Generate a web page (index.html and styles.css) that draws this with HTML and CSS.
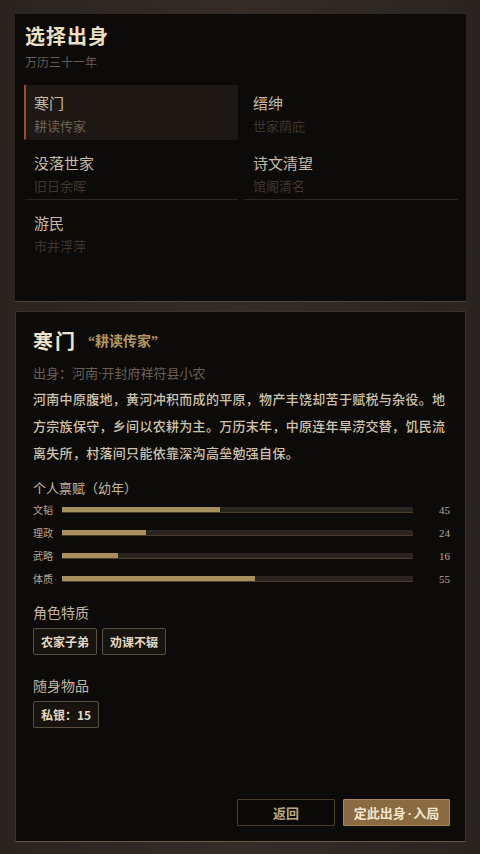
FILE: index.html
```html
<!DOCTYPE html>
<html lang="zh-CN">
<head>
    <meta charset="UTF-8">
    <meta name="viewport" content="width=device-width, initial-scale=1.0">
    <title>选择出身</title>
    <link rel="stylesheet" href="styles.css">
</head>
<body>
    <div class="screen">
        <section class="panel picker">
            <h1 class="picker-title">选择出身</h1>
            <div class="picker-sub">万历三十一年</div>
            <div class="origin-grid">
                <div class="origin-item selected">
                    <div class="origin-name">寒门</div>
                    <div class="origin-tag">耕读传家</div>
                </div>
                <div class="origin-item first-row">
                    <div class="origin-name">缙绅</div>
                    <div class="origin-tag">世家荫庇</div>
                </div>
                <div class="origin-item">
                    <div class="origin-name">没落世家</div>
                    <div class="origin-tag">旧日余晖</div>
                </div>
                <div class="origin-item">
                    <div class="origin-name">诗文清望</div>
                    <div class="origin-tag">馆阁清名</div>
                </div>
                <div class="origin-item last">
                    <div class="origin-name">游民</div>
                    <div class="origin-tag">市井浮萍</div>
                </div>
            </div>
        </section>

        <section class="panel detail">
            <div class="detail-head">
                <h2 class="detail-title">寒门</h2>
                <span class="detail-motto">“耕读传家”</span>
            </div>
            <div class="detail-origin">出身：河南·开封府祥符县小农</div>
            <p class="detail-text">河南中原腹地，黄河冲积而成的平原，物产丰饶却苦于赋税与杂役。地方宗族保守，乡间以农耕为主。万历末年，中原连年旱涝交替，饥民流离失所，村落间只能依靠深沟高垒勉强自保。</p>

            <h3 class="section-title stats-title">个人禀赋（幼年）</h3>
            <div class="stats">
                <div class="stat">
                    <span class="stat-label">文韬</span>
                    <div class="stat-track"><div class="stat-fill" style="width: 45%"></div></div>
                    <span class="stat-value">45</span>
                </div>
                <div class="stat">
                    <span class="stat-label">理政</span>
                    <div class="stat-track"><div class="stat-fill" style="width: 24%"></div></div>
                    <span class="stat-value">24</span>
                </div>
                <div class="stat">
                    <span class="stat-label">武略</span>
                    <div class="stat-track"><div class="stat-fill" style="width: 16%"></div></div>
                    <span class="stat-value">16</span>
                </div>
                <div class="stat">
                    <span class="stat-label">体质</span>
                    <div class="stat-track"><div class="stat-fill" style="width: 55%"></div></div>
                    <span class="stat-value">55</span>
                </div>
            </div>

            <h3 class="section-title">角色特质</h3>
            <div class="tags">
                <span class="tag">农家子弟</span>
                <span class="tag">劝课不辍</span>
            </div>

            <h3 class="section-title">随身物品</h3>
            <div class="tags">
                <span class="tag">私银：15</span>
            </div>

            <div class="actions">
                <button class="btn btn-back">返回</button>
                <button class="btn btn-confirm">定此出身<span class="dot">·</span>入局</button>
            </div>
        </section>
    </div>
</body>
</html>
```

FILE: styles.css
```css
body {
    margin: 0;
    padding: 0;
    font-family: "Noto Sans CJK SC", "Noto Sans", sans-serif;
    background-color: #2b2521;
    background-image: linear-gradient(90deg, #2a2420 0%, #332c27 50%, #2a2420 100%);
    color: #c8bca6;
}
.screen {
    width: 480px;
    height: 854px;
    box-sizing: border-box;
    padding: 14px 14px 12px 15px;
    display: flex;
    flex-direction: column;
    gap: 9px;
}
.panel {
    background: #0d0b0a;
    box-sizing: border-box;
}
.picker {
    height: 288px;
    padding: 8px 8px 0 9px;
    border-bottom: 1px solid #4e443b;
}
.picker-title {
    margin: 0 0 0 1px;
    font-size: 20px;
    line-height: 28px;
    font-weight: 700;
    color: #ece0c2;
    letter-spacing: 1px;
}
.picker-sub {
    margin: 3px 0 0 1px;
    font-size: 12px;
    line-height: 17px;
    color: #655d53;
}
.origin-grid {
    margin-top: 15px;
    display: grid;
    grid-template-columns: 214px 215px;
    column-gap: 5px;
    row-gap: 5px;
}
.origin-item {
    padding: 7px 8px 3px 8px;
    border-left: 2px solid transparent;
    border-bottom: 1px solid #2e271f;
}
.origin-item.selected {
    background: #1d1814;
    border-left-color: #a8462a;
    border-bottom-color: transparent;
}
.origin-item.first-row,
.origin-item.last {
    border-bottom-color: transparent;
}
.origin-name {
    font-size: 15px;
    line-height: 22px;
    color: #c6bba6;
}
.origin-tag {
    margin-top: 2px;
    font-size: 13px;
    line-height: 20px;
    color: #3e362d;
}
.selected .origin-tag {
    color: #6c6153;
}
.detail {
    flex: 1;
    padding: 14px 15px 15px 17px;
    border: 1px solid #3a3128;
    border-bottom-color: #6a5842;
    display: flex;
    flex-direction: column;
}
.detail-head {
    display: flex;
    align-items: center;
    gap: 11px;
    height: 28px;
}
.detail-title {
    margin: 0;
    font-size: 20px;
    font-weight: 700;
    color: #f0e4cc;
    letter-spacing: 2px;
}
.detail-motto {
    font-family: "Liberation Serif", "Noto Sans CJK SC", serif;
    font-size: 14px;
    font-weight: 700;
    color: #b3955f;
}
.detail-origin {
    margin-top: 9px;
    font-family: "Noto Sans", "Noto Sans CJK SC", sans-serif;
    font-size: 13px;
    line-height: 20px;
    color: #6a6052;
}
.detail-text {
    margin: 2px 0 0 0;
    font-size: 13px;
    line-height: 27px;
    font-weight: 500;
    letter-spacing: 0.3px;
    color: #cfc3ab;
}
.section-title {
    margin: 12px 0 0 0;
    font-size: 14px;
    line-height: 20px;
    font-weight: 400;
    color: #c2b6a0;
}
.stats-title {
    font-size: 13px;
}
.stats {
    display: flex;
    flex-direction: column;
}
.stat {
    display: grid;
    grid-template-columns: 29px 1fr 37px;
    align-items: center;
    height: 23px;
}
.stat-label {
    font-size: 10px;
    color: #b2a790;
}
.stat-track {
    height: 6px;
    background: #2b2520;
    border-bottom: 1px solid #4a3d2c;
    box-sizing: border-box;
}
.stat-fill {
    height: 5px;
    background: #a78f5e;
}
.stat-value {
    text-align: right;
    font-family: "Liberation Serif", serif;
    font-size: 11px;
    color: #b8ad96;
}
.tags {
    display: flex;
    gap: 5px;
    margin-top: 6px;
    margin-bottom: 8px;
}
.tag {
    padding: 0 7px;
    height: 27px;
    line-height: 25px;
    box-sizing: border-box;
    border: 1px solid #5a5040;
    border-radius: 2px;
    background: #17130f;
    font-size: 12px;
    font-weight: 700;
    color: #e4d8c0;
}
.actions {
    margin-top: auto;
    display: flex;
    justify-content: flex-end;
    gap: 8px;
}
.btn {
    height: 27px;
    padding: 0;
    font-family: inherit;
    font-size: 13px;
    font-weight: 700;
    border-radius: 1px;
    cursor: pointer;
}
.btn-back {
    width: 98px;
    background: #0a0908;
    border: 1px solid #4a3e2a;
    color: #bba77c;
}
.btn-confirm {
    width: 107px;
    background: #8a6a40;
    border: 1px solid #a8875a;
    color: #f2e6cf;
}
.dot {
    font-family: "Noto Sans", sans-serif;
    margin: 0 2px;
}
```
